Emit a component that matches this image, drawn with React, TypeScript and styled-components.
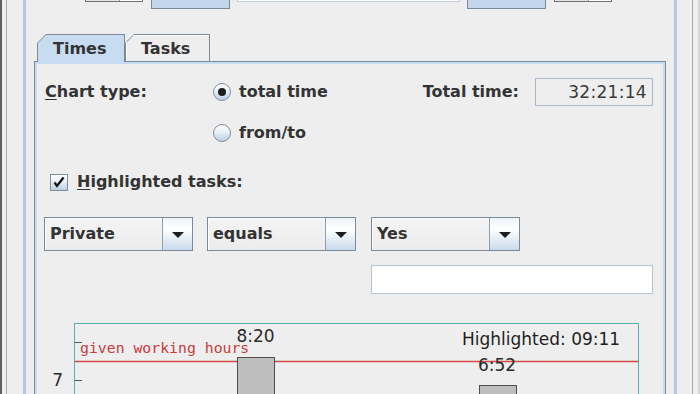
import React from "react";
import styled, { createGlobalStyle } from "styled-components";

const Global = createGlobalStyle`
  html, body { margin: 0; padding: 0; background: #eeeeee; }
  body { font-family: "DejaVu Sans", "Liberation Sans", sans-serif; }
  #root { width: 700px; height: 394px; overflow: hidden; }
  * { box-sizing: border-box; }
`;

const Root = styled.div`
  width: 700px;
  height: 394px;
  overflow: hidden;
  background: #eeeeee;
  border-left: 2px solid #5e5e5e;
  padding-left: 4px;
  display: flex;
`;

const Frame = styled.div`
  width: 687px;
  flex: none;
  height: 100%;
  border-left: 1px solid #a9a9a9;
  border-right: 1px solid #a9a9a9;
  padding: 0 15px 0 16px;
`;

const RightEdge = styled.div`
  flex: 1;
  border-right: 2px solid #d6d6d6;
`;

const BluePanel = styled.div`
  width: 654px;
  height: 100%;
  border-left: 3px solid #b4c8e0;
  border-right: 3px solid #b4c8e0;
  padding: 0 8px;
  display: flex;
  flex-direction: column;
  overflow: hidden;
`;

const ToolRow = styled.div`
  height: 9px;
  flex: none;
  display: flex;
  align-items: flex-end;
  overflow: hidden;
  padding-left: 51px;
`;

const SmallBox = styled.div<{ $ml: number }>`
  width: 58px;
  height: 24px;
  flex: none;
  margin-left: ${(p) => p.$ml}px;
  margin-bottom: 7px;
  display: flex;
  border: 1px solid #707070;
  background: #e4e4e4;
  &::after {
    content: "";
    margin-left: auto;
    width: 22px;
    height: 100%;
    background: #ffffff;
    border-left: 1px solid #9a9a9a;
  }
`;

const BlueButton = styled.div<{ $ml: number }>`
  width: 79px;
  height: 26px;
  flex: none;
  margin-left: ${(p) => p.$ml}px;
  border: 1px solid #7a8a99;
  background: #c3d6eb;
`;

const TopField = styled.div<{ $ml: number }>`
  width: 223px;
  height: 24px;
  flex: none;
  margin-left: ${(p) => p.$ml}px;
  margin-bottom: 7px;
  background: #ffffff;
  border: 1px solid #c4d0dc;
`;

const TabPane = styled.div`
  margin-top: 25px;
  width: 632px;
  flex: none;
  display: flex;
  flex-direction: column;
`;

const TabStrip = styled.div`
  height: 27px;
  flex: none;
  display: flex;
  align-items: flex-end;
  padding-left: 3px;
  position: relative;
  z-index: 1;
`;

const TabOuter = styled.div<{ $selected?: boolean }>`
  height: ${(p) => (p.$selected ? 28 : 27)}px;
  margin-bottom: ${(p) => (p.$selected ? -1 : 0)}px;
  background: #7a8a99;
  padding: 1px 1px 0 1px;
  clip-path: polygon(0 9px, 9px 0, 100% 0, 100% 100%, 0 100%);
`;

const TabInner = styled.div<{ $selected?: boolean; $pl: number; $w: number }>`
  height: 100%;
  width: ${(p) => p.$w}px;
  padding-left: ${(p) => p.$pl}px;
  background: ${(p) => (p.$selected ? "#c8dcf1" : "#eeeeee")};
  box-shadow: ${(p) => (p.$selected ? "none" : "inset 1px 1px 0 #ffffff")};
  clip-path: polygon(0 8px, 8px 0, 100% 0, 100% 100%, 0 100%);
  font-weight: bold;
  font-size: 16px;
  color: #333333;
  line-height: 27px;
  white-space: nowrap;
`;

const Content = styled.div`
  height: 360px;
  flex: none;
  border: 1px solid #7a8a99;
  box-shadow: inset 0 0 0 2px #c8dcf1;
  padding: 16px 2px 0 2px;
  display: flex;
  flex-direction: column;
`;

const Label = styled.div<{ $w?: number }>`
  font-weight: bold;
  font-size: 16px;
  color: #333333;
  height: 28px;
  line-height: 28px;
  white-space: nowrap;
  ${(p) => (p.$w ? `width: ${p.$w}px; flex: none;` : "")}
  u { text-decoration: underline; text-underline-offset: 2px; }
`;

const TopRow = styled.div`
  display: flex;
  flex: none;
  align-items: flex-start;
  padding: 0 10px 0 8px;
`;

const RadioCol = styled.div`
  flex: 1;
  display: flex;
  flex-direction: column;
  gap: 13px;
`;

const RadioItem = styled.div`
  height: 28px;
  display: flex;
  align-items: center;
  gap: 8px;
`;

const RadioCircle = styled.div<{ $on?: boolean }>`
  width: 18px;
  height: 18px;
  border-radius: 50%;
  border: 1px solid #7f8e9c;
  background: linear-gradient(180deg, #ffffff 0%, #e8eff7 45%, #bccfe4 100%);
  display: flex;
  align-items: center;
  justify-content: center;
  &::after {
    content: "";
    width: 8px;
    height: 8px;
    border-radius: 50%;
    background: ${(p) => (p.$on ? "#1e1e1e" : "transparent")};
  }
`;

const ValueField = styled.div`
  width: 118px;
  height: 28px;
  margin-left: 16px;
  border: 1px solid #a8b8ca;
  background: #eeeeee;
  text-align: right;
  padding-right: 5px;
  font-size: 17px;
  line-height: 26px;
  color: #3a3a3a;
  letter-spacing: 0.3px;
`;

const CheckRow = styled.div`
  margin-top: 21px;
  flex: none;
  padding-left: 13px;
  display: flex;
  align-items: center;
  gap: 9px;
`;

const CheckBox = styled.div`
  width: 18px;
  height: 17px;
  border: 1px solid #7f8e9c;
  background: linear-gradient(180deg, #ffffff 0%, #e8eff7 45%, #bccfe4 100%);
  display: flex;
  align-items: center;
  justify-content: center;
`;

const ComboGrid = styled.div`
  margin-top: 21px;
  flex: none;
  padding: 0 10px 0 7px;
  display: grid;
  grid-template-columns: 163px 164px 1fr;
  row-gap: 14px;
`;

const Combo = styled.div`
  width: 149px;
  height: 34px;
  border: 1px solid #7a8a99;
  display: flex;
`;

const ComboText = styled.div`
  flex: 1;
  background: linear-gradient(180deg, #f4f4f4 0%, #ececec 100%);
  box-shadow: inset 1px 1px 0 #ffffff;
  padding-left: 5px;
  font-weight: bold;
  font-size: 16px;
  line-height: 32px;
  color: #333333;
`;

const ComboButton = styled.div`
  width: 30px;
  border-left: 1px solid #8e9eae;
  background: linear-gradient(180deg, #eef3f9 0%, #ffffff 35%, #c9daec 100%);
  display: flex;
  align-items: center;
  justify-content: center;
  &::after {
    content: "";
    border-left: 6px solid transparent;
    border-right: 6px solid transparent;
    border-top: 6px solid #1e1e1e;
    margin-top: 1px;
  }
`;

const FilterField = styled.div`
  grid-column: 3;
  height: 29px;
  background: #ffffff;
  border: 1px solid #b4c3d3;
`;

const ChartSvg = styled.svg`
  margin-top: 22px;
  display: block;
  flex: none;
  font-family: "DejaVu Sans", "Liberation Sans", sans-serif;
`;

const Chart: React.FC = () => (
  <ChartSvg width="626" height="80" viewBox="0 0 626 80">
    <rect x="37.5" y="7.5" width="564" height="120" fill="none" stroke="#56aeae" />
    <line x1="38" y1="45.5" x2="601" y2="45.5" stroke="#d24a4a" strokeWidth="1.6" />
    <line x1="38" y1="26.5" x2="45" y2="26.5" stroke="#555555" />
    <line x1="38" y1="64.5" x2="45" y2="64.5" stroke="#555555" />
    <text x="26" y="70" textAnchor="end" fontSize="17" fill="#2a2a2a">7</text>
    <text
      x="43"
      y="37"
      fontSize="14.8"
      fill="#c83c3c"
      fontFamily="'DejaVu Sans Mono', 'Liberation Mono', monospace"
    >
      given working hours
    </text>
    <rect x="200.5" y="41.5" width="37" height="60" fill="#bebebe" stroke="#505050" />
    <rect x="442.5" y="69.5" width="37" height="40" fill="#bebebe" stroke="#505050" />
    <text x="218.5" y="26" textAnchor="middle" fontSize="17" fill="#2a2a2a">8:20</text>
    <text x="425" y="29" fontSize="17" fill="#1e1e1e">Highlighted: 09:11</text>
    <text x="460" y="55" textAnchor="middle" fontSize="17" fill="#2a2a2a">6:52</text>
  </ChartSvg>
);

const CheckMark: React.FC = () => (
  <svg width="12" height="12" viewBox="0 0 12 12">
    <path d="M1.5 6.5 L4 10 L10.5 1.5" fill="none" stroke="#111" strokeWidth="2.2" strokeLinejoin="miter" />
  </svg>
);

export default function App() {
  return (
    <>
      <Global />
      <Root>
        <Frame>
          <BluePanel>
            <ToolRow>
              <SmallBox $ml={0} />
              <BlueButton $ml={8} />
              <TopField $ml={7} />
              <BlueButton $ml={7} />
              <SmallBox $ml={8} />
            </ToolRow>
            <TabPane>
              <TabStrip>
                <TabOuter $selected>
                  <TabInner $selected $pl={15} $w={86}>Times</TabInner>
                </TabOuter>
                <TabOuter>
                  <TabInner $pl={15} $w={83}>Tasks</TabInner>
                </TabOuter>
              </TabStrip>
              <Content>
                <TopRow>
                  <Label $w={168}>
                    <u>C</u>hart type:
                  </Label>
                  <RadioCol>
                    <RadioItem>
                      <RadioCircle $on />
                      <Label>total time</Label>
                    </RadioItem>
                    <RadioItem>
                      <RadioCircle />
                      <Label>from/to</Label>
                    </RadioItem>
                  </RadioCol>
                  <Label>Total time:</Label>
                  <ValueField>32:21:14</ValueField>
                </TopRow>
                <CheckRow>
                  <CheckBox>
                    <CheckMark />
                  </CheckBox>
                  <Label>
                    <u>H</u>ighlighted tasks:
                  </Label>
                </CheckRow>
                <ComboGrid>
                  <Combo>
                    <ComboText>Private</ComboText>
                    <ComboButton />
                  </Combo>
                  <Combo>
                    <ComboText>equals</ComboText>
                    <ComboButton />
                  </Combo>
                  <Combo>
                    <ComboText>Yes</ComboText>
                    <ComboButton />
                  </Combo>
                  <FilterField />
                </ComboGrid>
                <Chart />
              </Content>
            </TabPane>
          </BluePanel>
        </Frame>
        <RightEdge />
      </Root>
    </>
  );
}
